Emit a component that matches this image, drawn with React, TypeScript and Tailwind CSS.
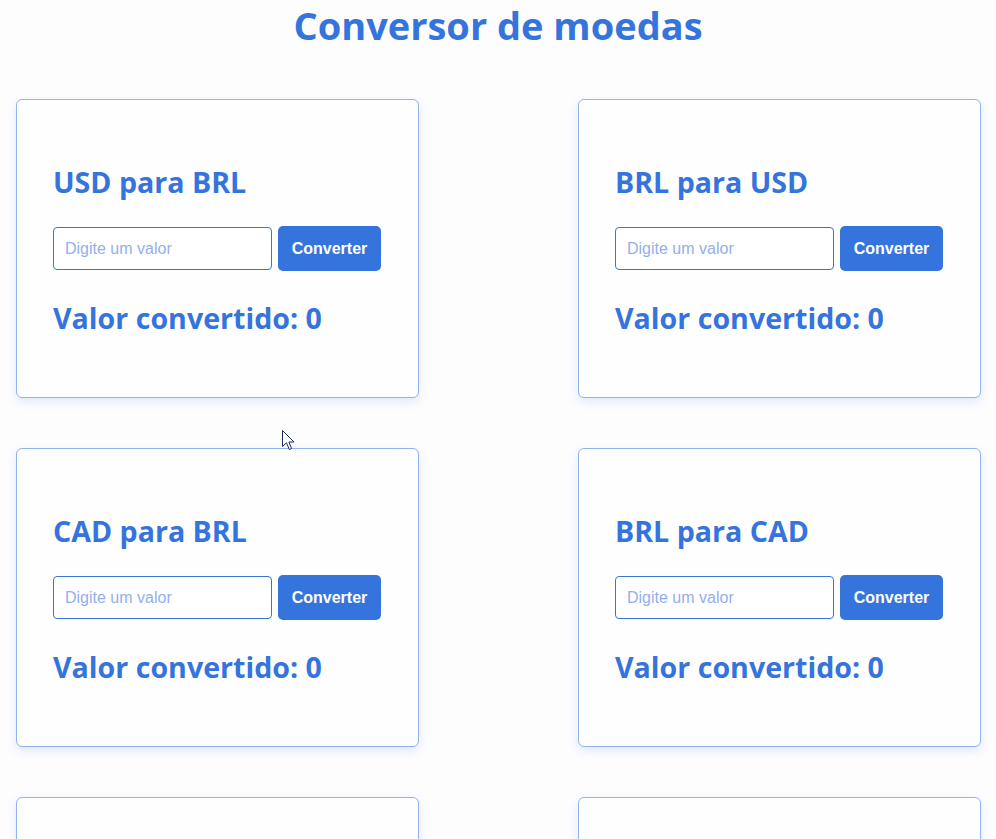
import React from "react";

const cards = [
  "USD para BRL",
  "BRL para USD",
  "CAD para BRL",
  "BRL para CAD",
  "EUR para BRL",
  "BRL para EUR",
];

function Card({ title }: { title: string }) {
  return (
    <div className="w-[403px] h-[299px] rounded-[6px] border border-[#8fb4ee] bg-[#fefeff] shadow-[0_4px_10px_rgba(53,116,221,0.15)] pl-[36px] pt-[65px] flex flex-col">
      <h2 className="text-[28.6px] leading-[34px] font-bold text-[#3574dd] [font-family:'Open_Sans',sans-serif]">
        {title}
      </h2>
      <div className="mt-[27px] flex items-center gap-[6px] h-[45px]">
        <input
          type="text"
          placeholder="Digite um valor"
          className="w-[219px] h-[43px] rounded-[4px] border border-[#3a74d6] bg-white px-[11px] text-[16px] text-[#3574dd] placeholder:text-[#92b0ec] outline-none [font-family:'Liberation_Sans',Arial,sans-serif]"
        />
        <button className="w-[103px] h-[45px] rounded-[5px] bg-[#3574dd] text-white text-[16px] font-bold [font-family:'Liberation_Sans',Arial,sans-serif]">
          Converter
        </button>
      </div>
      <p className="mt-[30px] text-[28.6px] leading-[34px] font-bold text-[#3574dd] [font-family:'Open_Sans',sans-serif]">
        Valor convertido: 0
      </p>
    </div>
  );
}

export default function App() {
  return (
    <div className="relative min-h-screen bg-[#fdfdfe] overflow-hidden">
      <h1 className="text-center text-[38px] leading-[50px] font-bold text-[#3574dd] [font-family:'Open_Sans',sans-serif]">
        Conversor de moedas
      </h1>
      <div className="mt-[49px] pl-[16px] pr-[15px] grid grid-cols-[403px_403px] justify-between gap-y-[50px]">
        {cards.map((c) => (
          <Card key={c} title={c} />
        ))}
      </div>
      <svg
        className="absolute left-[282px] top-[430px]"
        width="13"
        height="21"
        viewBox="0 0 13 21"
      >
        <path
          d="M0.5 0.5 L0.5 16.5 L4.5 12.8 L7.3 19.5 L9.6 18.5 L6.9 12 L12 12 Z"
          fill="#ffffff"
          stroke="#1e2a5a"
          strokeWidth="1"
          strokeLinejoin="round"
        />
      </svg>
    </div>
  );
}
